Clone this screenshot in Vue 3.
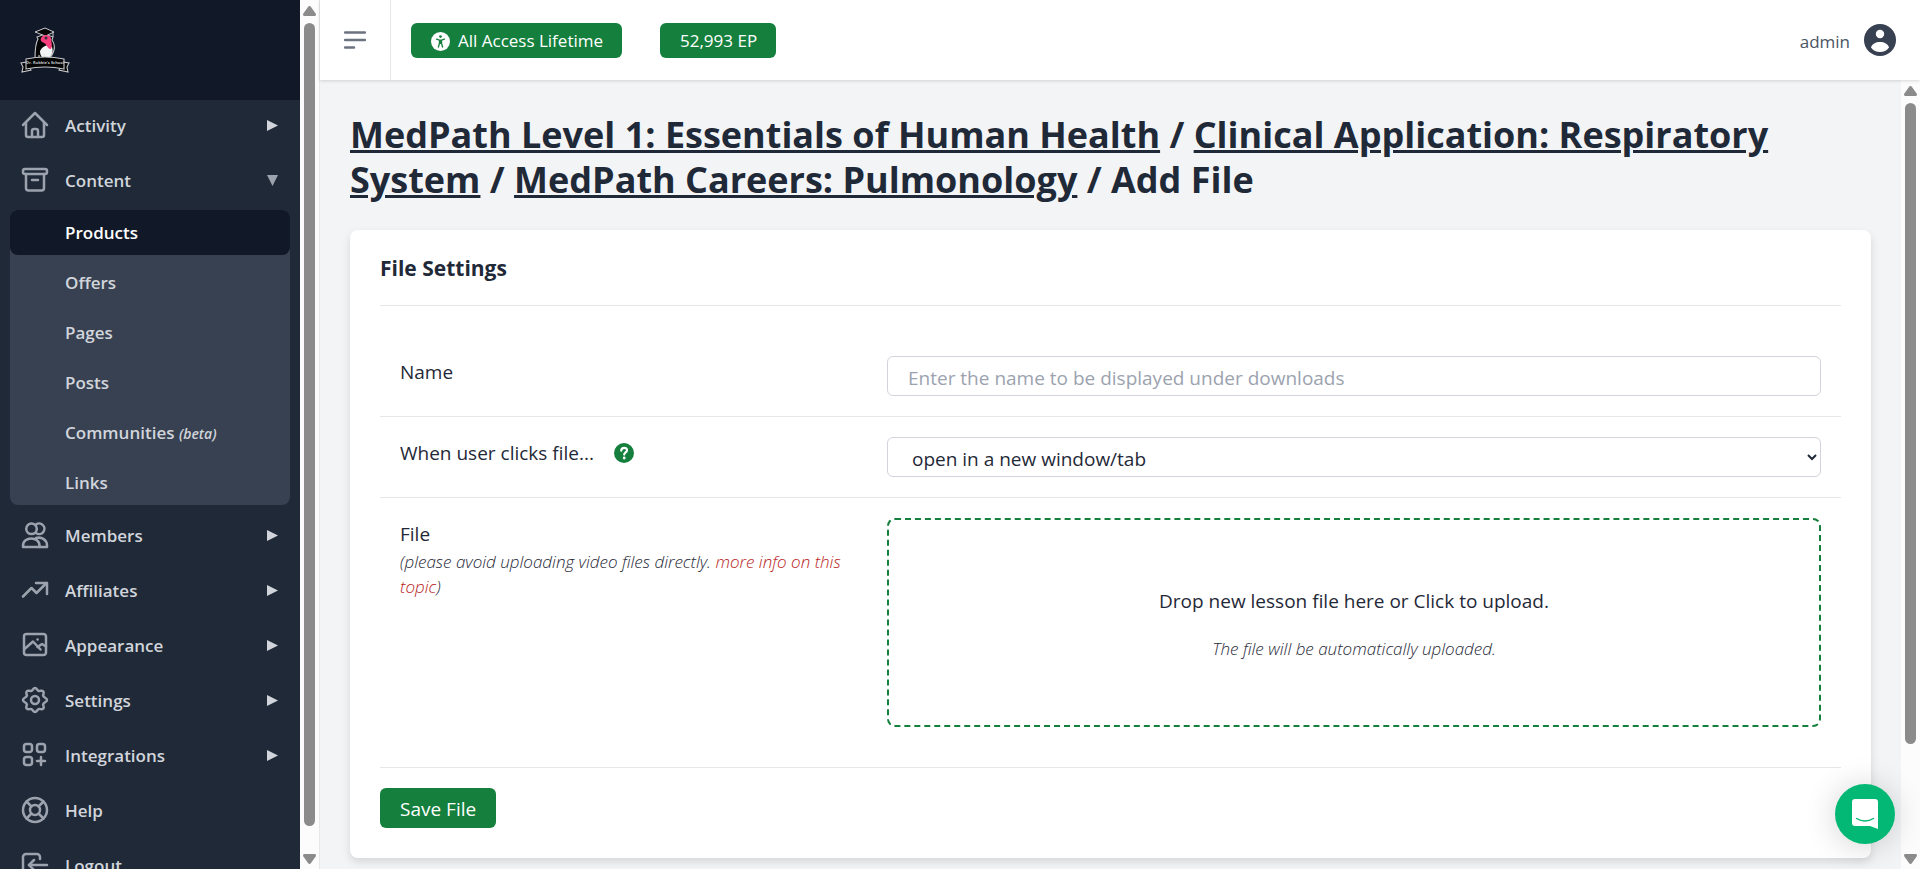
<template>
  <div class="layout">
    <aside class="sidebar">
      <div class="sidebar-body">
        <a href="#" class="brand" aria-label="Home">
          <svg class="logo" viewBox="0 0 50 46">
            <path d="M17 10l8-3 8 3-1 3c2 3 3 6 2 10-1 4-3 7-6 9H15c0-7 0-15 3-20z" fill="#050505" stroke="#c4c6ca" stroke-width="1.100" />
            <path d="M15 5L25 1l9 4-8.500 4z" fill="#050505" stroke="#c9cbd0" stroke-width="1" />
            <path d="M33 5v5" stroke="#c9cbd0" stroke-width="1" />
            <path d="M20 24c2-5 9-8 12-4 2 5-1 11-6 12-4 0-6-4-6-8z" fill="#f3f3f3" />
            <path d="M21 11c2-4 8-4 10 0 0 4 2 7 0 11-4 0-4-5-7-6-3-1-4-3-3-5z" fill="#f83e7c" />
            <circle cx="26" cy="11" r="1.500" fill="#31343c" />
            <path d="M19 28v5M24 27v5" stroke="#ddd" stroke-width="1" />
            <path d="M7 35L1 36l2 4-1 5 9-2zM43 35l6 1-2 4 1 5-9-2z" fill="#050505" stroke="#c4c6ca" stroke-width="1.100" />
            <path d="M6 32q19-4 38 0v10q-19-4-38 0z" fill="#050505" stroke="#c4c6ca" stroke-width="1.100" />
            <text x="25" y="37" text-anchor="middle" font-size="4" font-weight="700" fill="#c4c6ca">Dr. Robbie's School</text>
          </svg>
        </a>

        <nav class="nav">
          <template v-for="item in navItems" :key="item.label">
            <a href="#" class="nav-item">
              <svg class="nav-icon" viewBox="0 0 30 30">
                <path v-for="d in item.icon" :key="d" :d="d" />
              </svg>
              <span class="nav-label">{{ item.label }}</span>
              <svg v-if="item.arrow" class="arrow" :class="{ open: item.children }" viewBox="0 0 11 11">
                <path :d="item.children ? 'M0 0h11L5.500 11z' : 'M0 0l11 5.500L0 11z'" />
              </svg>
            </a>
            <div v-if="item.children" class="subnav">
              <a
                v-for="child in item.children"
                :key="child.label"
                href="#"
                class="subnav-item"
                :class="{ active: child.active }"
              >
                {{ child.label }} <em v-if="child.note">{{ child.note }}</em>
              </a>
            </div>
          </template>
        </nav>
      </div>

      <div class="scrollbar bordered">
        <svg class="scroll-arrow" viewBox="0 0 13 10"><path d="M6.500 0q1 0 1.500 1l5 7q0 2-1 2H1Q0 10 0 8l5-7q.5-1 1.500-1z" /></svg>
        <div class="scroll-track"><div class="scroll-thumb" :style="{ height: sidebarThumb + '%' }"></div></div>
        <svg class="scroll-arrow" viewBox="0 0 13 10"><path d="M6.500 10q1 0 1.500-1l5-7q0-2-1-2H1Q0 0 0 2l5 7q.5 1 1.500 1z" /></svg>
      </div>
    </aside>

    <div class="content">
      <header class="topbar">
        <button type="button" class="menu-btn" aria-label="Toggle menu">
          <svg viewBox="0 0 22 18"><path d="M1 1.500h20M1 9h20M1 16.500h9" /></svg>
        </button>
        <div class="badges">
          <a href="#" class="badge">
            <svg class="access-icon" viewBox="0 0 20 20">
              <circle cx="10" cy="10" r="10" fill="#fff" />
              <circle cx="10" cy="4.800" r="1.400" fill="#15803d" />
              <path d="M5.800 7.600l3 .9h2.400l3-.9M10 8.500v3.500M8.900 8.500v3.500L7.800 15.800M11.100 8.500v3.500l1.100 3.800" fill="none" stroke="#15803d" stroke-width="1.400" stroke-linecap="round" />
            </svg>
            All Access Lifetime
          </a>
          <a href="#" class="badge">52,993 EP</a>
        </div>
        <button type="button" class="user">
          <span>admin</span>
          <svg class="avatar" viewBox="0 0 32 32">
            <circle cx="16" cy="16" r="16" fill="#374151" />
            <circle cx="16" cy="10" r="4.200" fill="#fff" />
            <path d="M7 23.500c1.500-7.500 16.500-7.500 18 0-4 6-14 6-18 0z" fill="#fff" />
          </svg>
        </button>
      </header>

      <div class="content-body">
        <main class="main">
          <h1 class="page-title">
            <a href="#">MedPath Level 1: Essentials of Human Health</a> /
            <a href="#">Clinical Application: Respiratory System</a> /
            <a href="#">MedPath Careers: Pulmonology</a> / Add File
          </h1>

          <form class="card" @submit.prevent>
            <h2 class="card-title">File Settings</h2>

            <div class="row">
              <label for="name" class="cell cell-label">Name</label>
              <div class="cell">
                <input id="name" v-model="name" type="text" class="field" placeholder="Enter the name to be displayed under downloads" />
              </div>
            </div>

            <div class="row">
              <div class="cell cell-label label-help">
                <label for="target">When user clicks file...</label>
                <svg class="help" viewBox="0 0 20 20">
                  <circle cx="10" cy="10" r="10" fill="#15803d" />
                  <path d="M7.200 7.600c.2-3.800 6-3.600 5.800-.2-.1 2-2.800 2-2.800 4.200" fill="none" stroke="#fff" stroke-width="2.200" stroke-linecap="round" />
                  <circle cx="10.200" cy="15" r="1.400" fill="#fff" />
                </svg>
              </div>
              <div class="cell">
                <select id="target" v-model="target" class="field">
                  <option value="new">open in a new window/tab</option>
                  <option value="same">open in the same window/tab</option>
                </select>
              </div>
            </div>

            <div class="row">
              <div class="cell cell-label">
                <label for="file">File</label>
                <p class="note">(please avoid uploading video files directly. <a href="#">more info on this topic</a>)</p>
              </div>
              <div class="cell">
                <label class="dropzone">
                  <span>Drop new lesson file here or Click to upload.</span>
                  <span class="note">The file will be automatically uploaded.</span>
                  <input id="file" type="file" class="file-input" />
                </label>
              </div>
            </div>

            <div class="card-footer">
              <button type="submit" class="save">Save File</button>
            </div>
          </form>
        </main>

        <div class="scrollbar">
          <svg class="scroll-arrow" viewBox="0 0 13 10"><path d="M6.500 0q1 0 1.500 1l5 7q0 2-1 2H1Q0 10 0 8l5-7q.5-1 1.500-1z" /></svg>
          <div class="scroll-track"><div class="scroll-thumb" :style="{ height: mainThumb + '%' }"></div></div>
          <svg class="scroll-arrow" viewBox="0 0 13 10"><path d="M6.500 10q1 0 1.500-1l5-7q0-2-1-2H1Q0 0 0 2l5 7q.5 1 1.500 1z" /></svg>
        </div>
      </div>
    </div>

    <button type="button" class="chat" aria-label="Open chat">
      <svg viewBox="0 0 26 30">
        <path d="M3 0h20a3 3 0 0 1 3 3v27l-8-3H3a3 3 0 0 1-3-3V3a3 3 0 0 1 3-3z" fill="#fff" />
        <path d="M4.500 19.500q8.500 5 17 0" fill="none" stroke="#03b875" stroke-width="1.400" stroke-linecap="round" />
      </svg>
    </button>
  </div>
</template>

<script setup>
import { ref } from 'vue';

const name = ref('');
const target = ref('new');

// thumb height as a share of its track
const sidebarThumb = 97.5;
const mainThumb = 86.2;

const navItems = [
  {
    label: 'Activity',
    arrow: true,
    icon: ['M3 15L15 3l12 12', 'M6 12.500V25a2 2 0 0 0 2 2h14a2 2 0 0 0 2-2V12.500', 'M12 27v-6a2 2 0 0 1 2-2h2a2 2 0 0 1 2 2v6']
  },
  {
    label: 'Content',
    arrow: true,
    icon: ['M5 4h20a2 2 0 0 1 2 2v1a2 2 0 0 1-2 2H5a2 2 0 0 1-2-2V6a2 2 0 0 1 2-2z', 'M6 9v14a2.500 2.500 0 0 0 2.500 2.500h13A2.500 2.500 0 0 0 24 23V9', 'M12 15h6'],
    children: [
      { label: 'Products', active: true },
      { label: 'Offers' },
      { label: 'Pages' },
      { label: 'Posts' },
      { label: 'Communities', note: '(beta)' },
      { label: 'Links' }
    ]
  },
  {
    label: 'Members',
    arrow: true,
    icon: ['M11.500 3.500a5.300 5.300 0 1 1 0 10.600 5.300 5.300 0 1 1 0-10.600z', 'M16 4.500a5.300 5.300 0 1 1 0 8.600', 'M3 27v-1.500c0-9.500 16.500-9.500 16.500 0V27z', 'M16 18c6-1.500 11 2 11 7.500V27h-7.500']
  },
  {
    label: 'Affiliates',
    arrow: true,
    icon: ['M3 21.500l8.500-8.500 5 5L26.500 8', 'M16 8h11v11']
  },
  {
    label: 'Appearance',
    arrow: true,
    icon: ['M6.500 4h17A2.500 2.500 0 0 1 26 6.500v16a2.500 2.500 0 0 1-2.500 2.500h-17A2.500 2.500 0 0 1 4 22.500v-16A2.500 2.500 0 0 1 6.500 4z', 'M4.500 19l8.500-7.500 7.500 8', 'M17.500 17l4.500-3 4 2.500', 'M17.500 9.500h.1']
  },
  {
    label: 'Settings',
    arrow: true,
    icon: [
      'M15 3c2 0 2 2.200 3.600 2.800 1.500.6 3.200-1 4.600.5s-.1 3-.1 4.300C23.800 13 27 12.600 27 15s-3.200 2-3.900 4.300c0 1.300 1.500 2.800.1 4.300s-3.100-.1-4.600.5C17 24.800 17 27 15 27s-2-2.200-3.600-2.900c-1.500-.6-3.200 1-4.600-.5s.1-3 .1-4.300C6.200 17 3 17.400 3 15s3.200-2 3.900-4.400c0-1.300-1.500-2.800-.1-4.300s3.100.1 4.600-.5C13 5.200 13 3 15 3z',
      'M15 11a4 4 0 1 1 0 8 4 4 0 1 1 0-8z'
    ]
  },
  {
    label: 'Integrations',
    arrow: true,
    icon: ['M6.500 4h3a2.500 2.500 0 0 1 2.500 2.500v3a2.500 2.500 0 0 1-2.500 2.500h-3a2.500 2.500 0 0 1-2.500-2.500v-3a2.500 2.500 0 0 1 2.500-2.500z', 'M19.500 4h3a2.500 2.500 0 0 1 2.500 2.500v3a2.500 2.500 0 0 1-2.500 2.500h-3a2.500 2.500 0 0 1-2.500-2.500v-3a2.500 2.500 0 0 1 2.500-2.500z', 'M6.500 17h3a2.500 2.500 0 0 1 2.500 2.500v3a2.500 2.500 0 0 1-2.500 2.500h-3a2.500 2.500 0 0 1-2.500-2.500v-3a2.500 2.500 0 0 1 2.500-2.500z', 'M21 17v8M17 21h8']
  },
  {
    label: 'Help',
    icon: ['M15 3a12 12 0 1 1 0 24 12 12 0 1 1 0-24z', 'M15 10a5 5 0 1 1 0 10 5 5 0 1 1 0-10z', 'M6.500 6.500l5 5M18.500 18.500l5 5M23.500 6.500l-5 5M11.500 18.500l-5 5']
  },
  {
    label: 'Logout',
    icon: ['M20 9V7a3 3 0 0 0-3-3H6a3 3 0 0 0-3 3v16a3 3 0 0 0 3 3h11a3 3 0 0 0 3-3v-2', 'M27 15H9', 'M14 10l-5 5 5 5']
  }
];
</script>

<style>
body {
  overflow: hidden;
}
</style>

<style scoped>
* {
  box-sizing: border-box;
}

.layout {
  display: flex;
  height: 100vh;
  overflow: hidden;
  font-family: 'Segoe UI', 'Open Sans', 'Noto Sans', sans-serif;
  font-size: 19px;
  line-height: 30px;
  color: #1f2937;
  background-color: #f3f4f6;
}

a {
  color: inherit;
  text-decoration: none;
}

button,
input,
select {
  font-family: inherit;
  font-size: inherit;
}

/* sidebar */
.sidebar {
  display: flex;
  flex: none;
}

.sidebar-body {
  width: 300px;
  overflow: hidden;
  background-color: #1f2937;
}

.brand {
  display: flex;
  align-items: center;
  height: 100px;
  padding: 0 20px;
  background-color: #111827;
}

.logo {
  width: 50px;
  height: 46px;
}

.nav {
  display: flex;
  flex-direction: column;
  gap: 5px;
}

.nav-item {
  display: flex;
  align-items: center;
  height: 50px;
  padding: 0 22px 0 20px;
  font-size: 17px;
  font-weight: 600;
  color: #d1d5db;
}

.nav-icon {
  width: 30px;
  height: 30px;
  margin-right: 15px;
  fill: none;
  stroke: #9ca3af;
  stroke-width: 2.500;
  stroke-linecap: round;
  stroke-linejoin: round;
}

.nav-label {
  flex: 1;
  padding-top: 2px;
}

.arrow {
  width: 11px;
  height: 11px;
  fill: #d1d5db;
}

.arrow.open {
  fill: #9ca3af;
}

.subnav {
  display: flex;
  flex-direction: column;
  gap: 5px;
  margin: 0 10px;
  border-radius: 8px;
  background-color: #374151;
}

.subnav-item {
  height: 45px;
  padding-left: 55px;
  border-radius: 8px;
  font-size: 17px;
  font-weight: 600;
  line-height: 46px;
  color: #d1d5db;
}

.subnav-item em {
  font-size: 14px;
}

.subnav-item.active {
  color: #fff;
  background-color: #111827;
}

/* scrollbars */
.scrollbar {
  display: flex;
  flex: none;
  flex-direction: column;
  align-items: center;
  gap: 7px;
  width: 19px;
  padding: 6px 0 5px;
  background-color: #fcfcfc;
}

.scrollbar.bordered {
  width: 20px;
  border-right: 1px solid #e5e7eb;
}

.scroll-arrow {
  flex: none;
  width: 13px;
  height: 10px;
  fill: #8b8b8b;
}

.scroll-track {
  flex: 1;
  width: 11px;
}

.scroll-thumb {
  border-radius: 6px;
  background-color: #8b8b8b;
}

/* top bar */
.content {
  display: flex;
  flex: 1;
  flex-direction: column;
  min-width: 0;
}

.topbar {
  position: relative;
  display: flex;
  flex: none;
  height: 80px;
  background-color: #fff;
  box-shadow: 0 1px 3px rgba(0, 0, 0, 0.15);
}

.menu-btn {
  display: flex;
  align-items: center;
  justify-content: center;
  width: 71px;
  padding: 0;
  border: 0;
  border-right: 1px solid #e5e7eb;
  background: none;
}

.menu-btn svg {
  width: 22px;
  height: 18px;
  fill: none;
  stroke: #6b7280;
  stroke-width: 2.500;
  stroke-linecap: round;
}

.badges {
  display: flex;
  flex: 1;
  align-items: center;
  gap: 38px;
  padding-left: 20px;
}

.badge {
  display: flex;
  align-items: center;
  gap: 8px;
  height: 35px;
  padding: 2px 19px 0 20px;
  border-radius: 6px;
  font-size: 17px;
  color: #fff;
  background-color: #15803d;
}

.access-icon {
  width: 19px;
  height: 19px;
}

.user {
  display: flex;
  align-items: center;
  gap: 14px;
  padding: 0 24px;
  border: 0;
  font-size: 17px;
  color: #4b5563;
  background: none;
}

.user span {
  padding-top: 2px;
}

.avatar {
  width: 32px;
  height: 32px;
}

/* page */
.content-body {
  display: flex;
  flex: 1;
  min-height: 0;
}

.main {
  flex: 1;
  min-width: 0;
  padding: 32px 30px 0;
  overflow: hidden;
}

.page-title {
  margin: 0 0 28px;
  font-size: 36px;
  font-weight: 700;
  line-height: 45px;
}

.page-title a {
  text-decoration: underline;
  text-decoration-thickness: 3px;
}

.card {
  padding: 21px 30px 30px;
  border-radius: 8px;
  background-color: #fff;
  box-shadow: 0 4px 8px rgba(0, 0, 0, 0.12);
}

.card-title {
  margin: 0 0 30px;
  padding-bottom: 19px;
  border-bottom: 1px solid #e5e7eb;
  font-size: 21px;
  font-weight: 700;
  line-height: 35px;
}

.row {
  display: grid;
  grid-template-columns: 1fr 2fr;
  border-bottom: 1px solid #e5e7eb;
}

.row:nth-of-type(3) {
  border-bottom: 0;
}

.cell {
  padding: 20px;
}

.cell-label {
  padding: 21px 20px 19px;
}

.label-help {
  display: flex;
  align-items: flex-start;
  gap: 20px;
}

.help {
  width: 20px;
  height: 30px;
}

.field {
  display: block;
  width: 100%;
  height: 40px;
  padding: 4px 20px 0;
  border: 1px solid #d1d5db;
  border-radius: 6px;
  color: #1f2937;
  background-color: #fff;
}

select.field {
  padding-right: 2px;
}

.field::placeholder {
  color: #9ca3af;
}

.note {
  margin: 0;
  font-size: 17px;
  font-style: italic;
  font-weight: 300;
  line-height: 25px;
}

.note a {
  color: #b91c1c;
}

.dropzone {
  display: flex;
  flex-direction: column;
  align-items: center;
  gap: 20px;
  padding: 66px 20px 64px;
  border: 2px dashed #15803d;
  border-radius: 8px;
  cursor: pointer;
}

.file-input {
  display: none;
}

.card-footer {
  margin-top: 20px;
  padding-top: 20px;
  border-top: 1px solid #e5e7eb;
}

.save {
  height: 40px;
  padding: 2px 20px 0;
  border: 0;
  border-radius: 6px;
  color: #fff;
  background-color: #15803d;
}

/* chat launcher */
.chat {
  position: absolute;
  right: 25px;
  bottom: 25px;
  display: flex;
  align-items: center;
  justify-content: center;
  width: 60px;
  height: 60px;
  padding: 0;
  border: 0;
  border-radius: 50%;
  background-color: #03b875;
  box-shadow: 0 2px 32px rgba(0, 0, 0, 0.18);
}

.chat svg {
  width: 26px;
  height: 30px;
}
</style>
